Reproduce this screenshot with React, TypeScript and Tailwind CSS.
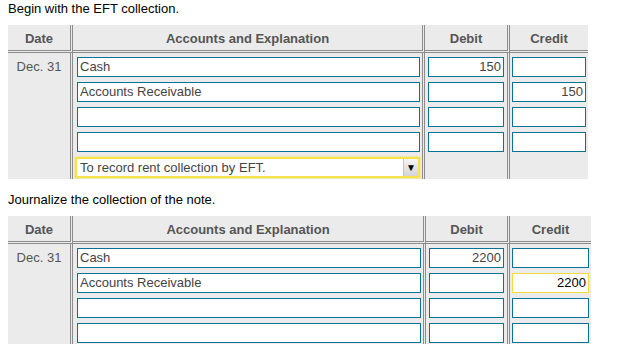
import React from "react";

type Line = { account: string; debit: string; credit: string; focus?: "credit" };

const FIRST: Line[] = [
  { account: "Cash", debit: "150", credit: "" },
  { account: "Accounts Receivable", debit: "", credit: "150" },
  { account: "", debit: "", credit: "" },
  { account: "", debit: "", credit: "" },
];

const SECOND: Line[] = [
  { account: "Cash", debit: "2200", credit: "" },
  { account: "Accounts Receivable", debit: "", credit: "2200", focus: "credit" },
  { account: "", debit: "", credit: "" },
  { account: "", debit: "", credit: "" },
];

const divider = "border-r-[3px] border-double border-[#8c8c8c]";
const head = "h-7 border-b-[3px] border-b-[#8c8c8c] flex items-center justify-center pt-[3px] font-bold text-[13px]";

function Box({ value, align = "left", focus }: { value: string; align?: "left" | "right"; focus?: boolean }) {
  return (
    <div
      className={`h-5 bg-white border px-[2px] leading-[18px] text-[13px] truncate ${
        focus ? "border-[#f2dc3c] text-black" : "border-[#0a7297] text-[#444]"
      } ${align === "right" ? "text-right" : "text-left"}`}
    >
      {value}
    </div>
  );
}

function Journal({ lines, cols, explanation }: { lines: Line[]; cols: string; explanation?: string }) {
  return (
    <div className={`grid ${cols} bg-[#ebebeb] text-[#555]`}>
      {/* header */}
      <div className={`${divider} ${head}`}>Date</div>
      <div className={`${divider} ${head}`}>Accounts and Explanation</div>
      <div className={`${divider} ${head}`}>Debit</div>
      <div className={`border-double ${head}`}>Credit</div>

      {lines.map((l, i) => (
        <React.Fragment key={i}>
          <div className={`${divider} h-[25px] pt-[4px] text-[13px] text-center leading-5`}>{i === 0 ? "Dec. 31" : ""}</div>
          <div className={`${divider} h-[25px] pt-[4px] pl-[4px] pr-[2px]`}>
            <Box value={l.account} />
          </div>
          <div className={`${divider} h-[25px] pt-[4px] pl-[3px] pr-[3px]`}>
            <Box value={l.debit} align="right" />
          </div>
          <div className="h-[25px] pt-[4px] pl-[2px] pr-[2px]">
            <Box value={l.credit} align="right" focus={l.focus === "credit"} />
          </div>
        </React.Fragment>
      ))}

      {explanation && (
        <>
          <div className={`${divider} h-[26px]`} />
          <div className={`${divider} h-[26px] pt-[4px] pl-[2px] pr-[2px]`}>
            <div className="h-[21px] flex bg-white border-2 border-[#f6e34a] shadow-[0_0_2px_#f6e34a]">
              <div className="flex-1 px-[3px] text-[13px] leading-[17px] text-[#444] truncate">{explanation}</div>
              <div className="w-[15px] flex items-center justify-center bg-gradient-to-b from-[#f6f6f6] to-[#d4d4d4] border-l border-[#c4c4c4]">
                <span className="text-[10px] text-black leading-none">▼</span>
              </div>
            </div>
          </div>
          <div className={`${divider} h-[26px]`} />
          <div className="h-[26px]" />
        </>
      )}
    </div>
  );
}

export default function App() {
  return (
    <main
      className="w-[639px] h-[361px] bg-white overflow-hidden px-2 pt-[1px]"
      style={{ fontFamily: '"Liberation Sans", Arial, sans-serif' }}
    >
      <p className="text-[13px] text-black leading-[16px]">Begin with the EFT collection.</p>
      <div className="mt-[8px] w-[580px]">
        <Journal lines={FIRST} cols="grid-cols-[65px_352px_85px_78px]" explanation="To record rent collection by EFT." />
      </div>

      <p className="mt-[13px] text-[13px] text-black leading-[16px]">Journalize the collection of the note.</p>
      <div className="mt-[8px] w-[583px]">
        <Journal lines={SECOND} cols="grid-cols-[65px_353px_84px_81px]" />
      </div>
    </main>
  );
}
